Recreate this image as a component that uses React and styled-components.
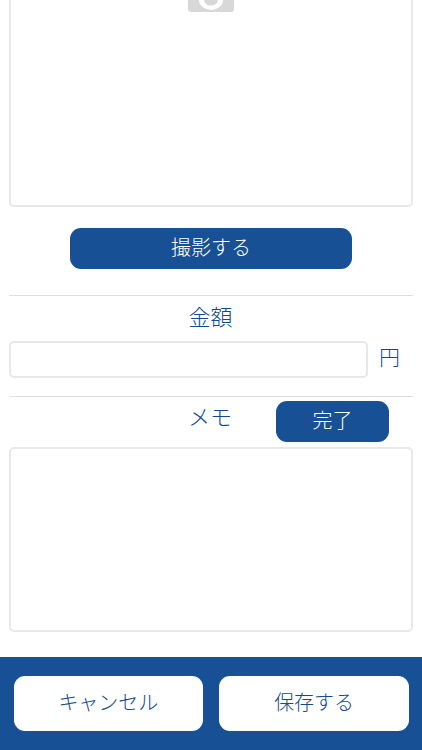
import React from 'react';
import styled, { createGlobalStyle } from 'styled-components';

const GlobalStyle = createGlobalStyle`
	html, body {
		margin: 0;
		padding: 0;
		background-color: #fff;
	}
	* {
		box-sizing: border-box;
	}
	body {
		font-family: "Noto Sans CJK JP", "Liberation Sans", sans-serif;
		font-weight: 300;
		color: #134a8c;
	}
`;

const Page = styled.div`
	width: 422px;
	height: 750px;
	display: flex;
	flex-direction: column;
	overflow: hidden;
`;

const Content = styled.main`
	flex: 1;
	padding: 0 9px;
	display: flex;
	flex-direction: column;
`;

const PhotoBox = styled.div`
	height: 207px;
	border: 2px solid #e8e8e8;
	border-top: none;
	border-radius: 0 0 5px 5px;
	display: flex;
	justify-content: center;
	align-items: flex-start;
`;

const CameraIcon = styled.svg`
	width: 46px;
	height: 13px;
	display: block;
`;

const ShootRow = styled.div`
	display: flex;
	justify-content: center;
	margin: 21px 0 26px;
`;

const PrimaryButton = styled.button`
	width: ${({ $width }) => $width}px;
	height: 41px;
	padding: 0 0 4px;
	border: none;
	border-radius: 11px;
	background-color: #175095;
	color: #fff;
	font-family: inherit;
	font-weight: inherit;
	font-size: 20px;
	line-height: 1;
`;

const Divider = styled.hr`
	width: 100%;
	height: 1px;
	margin: 0;
	border: none;
	background-color: #dfdfdf;
`;

const AmountLabel = styled.div`
	height: 45px;
	padding: 0 1px 7px 0;
	display: flex;
	align-items: center;
	justify-content: center;
	font-size: 22px;
	line-height: 1;
`;

const AmountRow = styled.div`
	display: flex;
	align-items: center;
	margin-bottom: 18px;
`;

const AmountInput = styled.input`
	width: 359px;
	height: 37px;
	border: 2px solid #e8e8e8;
	border-radius: 5px;
	background-color: #fff;
	outline: none;
`;

const Unit = styled.span`
	margin-left: 11px;
	padding-bottom: 6px;
	font-size: 21px;
	line-height: 1;
`;

const MemoHeader = styled.div`
	height: 50px;
	padding: 4px 24px 0 0;
	display: grid;
	grid-template-columns: 1fr auto;
	align-items: start;
`;

const MemoLabel = styled.span`
	padding: 3px 0 0 179px;
	font-size: 22px;
	line-height: 1;
`;

const MemoArea = styled.textarea`
	display: block;
	width: 100%;
	height: 185px;
	border: 2px solid #e8e8e8;
	border-radius: 5px;
	background-color: #fff;
	outline: none;
	resize: none;
`;

const Footer = styled.footer`
	height: 93px;
	padding: 19px 13px 19px 13.5px;
	background-color: #175095;
	display: flex;
	gap: 16px;
`;

const FooterButton = styled.button`
	flex: 1;
	height: 55px;
	padding: 0 0 4px;
	border: none;
	border-radius: 11px;
	background-color: #fff;
	color: #134a8c;
	font-family: inherit;
	font-weight: inherit;
	font-size: 20px;
	line-height: 1;
`;

function App() {
	return (
		<>
			<GlobalStyle />
			<Page>
				<Content>
					<PhotoBox>
						<CameraIcon viewBox="0 0 46 13">
							<path d="M0 0H46V9a3 3 0 0 1-3 3H3a3 3 0 0 1-3-3Z" fill="#d8d8d8" />
							<path d="M11 0a12 10 0 0 0 24 0h-5a7 5.5 0 0 1-14 0Z" fill="#fff" />
						</CameraIcon>
					</PhotoBox>

					<ShootRow>
						<PrimaryButton type="button" $width={282}>撮影する</PrimaryButton>
					</ShootRow>

					<Divider />
					<AmountLabel>金額</AmountLabel>
					<AmountRow>
						<AmountInput type="text" />
						<Unit>円</Unit>
					</AmountRow>

					<Divider />
					<MemoHeader>
						<MemoLabel>メモ</MemoLabel>
						<PrimaryButton type="button" $width={113}>完了</PrimaryButton>
					</MemoHeader>
					<MemoArea />
				</Content>

				<Footer>
					<FooterButton type="button">キャンセル</FooterButton>
					<FooterButton type="button">保存する</FooterButton>
				</Footer>
			</Page>
		</>
	);
}

export default App;
